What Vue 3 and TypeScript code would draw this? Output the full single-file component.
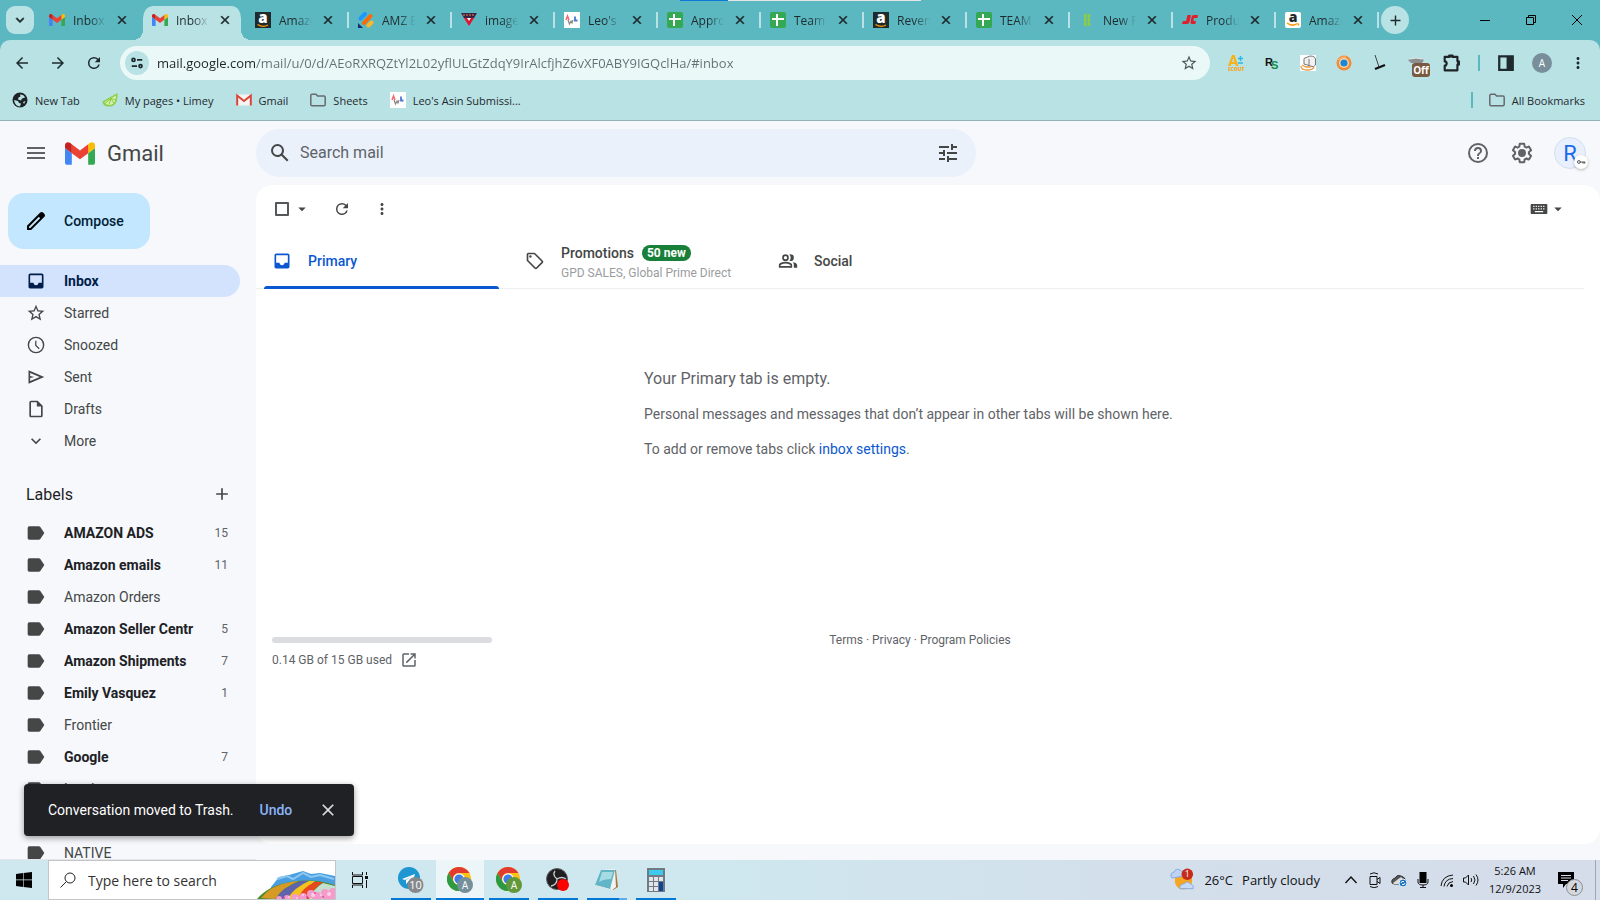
<script setup lang="ts">
import { ref } from 'vue'

interface BrowserTab { title: string; icon: string; active?: boolean; divider?: boolean }
interface NavItem { name: string; icon: string; active?: boolean }
interface MailLabel { name: string; count?: number }

const tabs: BrowserTab[] = [
  { title: 'Inbox (', icon: 'gmail' },
  { title: 'Inbox (', icon: 'gmail', active: true },
  { title: 'Amazo', icon: 'amazon-dark' },
  { title: 'AMZ B', icon: 'stripes', divider: true },
  { title: 'image', icon: 'tri', divider: true },
  { title: "Leo's A", icon: 'leo', divider: true },
  { title: 'Appro', icon: 'sheets', divider: true },
  { title: 'Team L', icon: 'sheets', divider: true },
  { title: 'Reven', icon: 'amazon-dark', divider: true },
  { title: 'TEAM', icon: 'sheets', divider: true },
  { title: 'New P', icon: 'wheat', divider: true },
  { title: 'Produ', icon: 'jc', divider: true },
  { title: 'Amazo', icon: 'amazon-light', divider: true },
]

const bookmarks = [
  { name: 'New Tab', icon: 'globe' },
  { name: 'My pages • Limey', icon: 'lime' },
  { name: 'Gmail', icon: 'gmail-old' },
  { name: 'Sheets', icon: 'folder' },
  { name: "Leo's Asin Submissi...", icon: 'leo' },
]

const extensions = ['scout', 'rs', 'toaster', 'orb', 'axe', 'off', 'puzzle']

const p = {
  close: 'M19 6.41 17.59 5 12 10.59 6.41 5 5 6.41 10.59 12 5 17.59 6.41 19 12 13.41 17.59 19 19 17.59 13.41 12z',
  down: 'M7.41 8.59 12 13.17l4.59-4.58L18 10l-6 6-6-6z',
  plus: 'M19 13h-6v6h-2v-6H5v-2h6V5h2v6h6z',
  back: 'M20 11H7.83l5.59-5.59L12 4l-8 8 8 8 1.41-1.41L7.83 13H20z',
  forward: 'm12 4-1.41 1.41L16.17 11H4v2h12.17l-5.58 5.59L12 20l8-8z',
  reload: 'M17.65 6.35A7.96 7.96 0 0 0 12 4a8 8 0 1 0 7.73 10h-2.08A6 6 0 1 1 12 6c1.66 0 3.14.69 4.22 1.78L13 11h7V4z',
  star: 'M22 9.24l-7.19-.62L12 2 9.19 8.63 2 9.24l5.46 4.73L5.82 21 12 17.27 18.18 21l-1.63-7.03zM12 15.4l-3.76 2.27 1-4.28-3.32-2.88 4.38-.38L12 6.1l1.71 4.04 4.38.38-3.32 2.88 1 4.28z',
  dots: 'M12 8c1.1 0 2-.9 2-2s-.9-2-2-2-2 .9-2 2 .9 2 2 2m0 2c-1.100 0-2 .9-2 2s.9 2 2 2 2-.9 2-2-.9-2-2-2m0 6c-1.100 0-2 .9-2 2s.9 2 2 2 2-.9 2-2-.9-2-2-2',
  menu: 'M3 18h18v-2H3zm0-5h18v-2H3zm0-7v2h18V6z',
  search: 'M20.49 19l-5.73-5.73C15.530 12.200 16 10.910 16 9.500A6.500 6.500 0 1 0 9.500 16c1.410 0 2.700-.470 3.770-1.240L19 20.490zM5 9.500a4.500 4.500 0 1 1 9 0 4.500 4.500 0 0 1-9 0',
  tune: 'M3 17v2h6v-2zM3 5v2h10V5zm10 16v-2h8v-2h-8v-2h-2v6zM7 9v2H3v2h4v2h2V9zm14 4v-2H11v2zm-6-4h2V7h4V5h-4V3h-2z',
  help: 'M11 18h2v-2h-2zm1-16a10 10 0 1 0 0 20 10 10 0 0 0 0-20m0 18a8 8 0 1 1 0-16 8 8 0 0 1 0 16m0-14a4 4 0 0 0-4 4h2c0-1.100.9-2 2-2s2 .9 2 2c0 2-3 1.750-3 5h2c0-2.250 3-2.500 3-5a4 4 0 0 0-4-4',
  gear: 'M13.850 22.250h-3.700c-.740 0-1.360-.540-1.450-1.270l-.270-1.890c-.270-.140-.530-.290-.790-.460l-1.800.720c-.7.260-1.470-.030-1.810-.650L2.200 15.530c-.35-.660-.2-1.440.36-1.880l1.530-1.190c-.010-.150-.020-.3-.020-.460 0-.150.010-.310.020-.460l-1.520-1.190c-.590-.45-.740-1.260-.370-1.880l1.850-3.190c.340-.620 1.110-.9 1.790-.630l1.810.730c.26-.17.52-.32.78-.46l.27-1.910c.09-.7.710-1.250 1.440-1.250h3.700c.74 0 1.360.54 1.450 1.270l.27 1.890c.27.14.53.29.79.46l1.800-.72c.71-.26 1.480.03 1.820.65l1.840 3.180c.36.660.2 1.440-.36 1.880l-1.520 1.190c.01.15.02.3.02.46s-.01.31-.02.46l1.520 1.190c.56.45.72 1.230.37 1.860l-1.860 3.220c-.34.62-1.110.9-1.800.63l-1.800-.72c-.26.17-.52.32-.78.46l-.27 1.910c-.1.680-.72 1.220-1.460 1.220m-3.230-2h2.760l.37-2.550.53-.22c.44-.18.88-.44 1.340-.78l.45-.34 2.380.96 1.380-2.400-2.030-1.580.07-.56c.03-.26.06-.51.06-.78s-.03-.53-.06-.78l-.07-.56 2.030-1.580-1.390-2.400-2.390.96-.45-.35c-.42-.32-.87-.58-1.330-.77l-.52-.22-.37-2.550h-2.760l-.37 2.550-.53.21c-.44.19-.88.44-1.340.79l-.45.33-2.380-.95-1.390 2.390 2.030 1.580-.07.56a7 7 0 0 0 0 1.570l.07.56-2.030 1.580 1.380 2.400 2.390-.96.45.35c.43.33.86.58 1.330.77l.53.22zM12 8a4 4 0 1 1 0 8 4 4 0 0 1 0-8',
  pencil: 'M20.410 4.940l-1.350-1.350c-.780-.780-2.050-.780-2.830 0L3 16.820V21h4.180L20.410 7.770c.79-.78.79-2.050 0-2.830M6.350 19H5v-1.350l9.820-9.820 1.350 1.350z',
  inbox: 'M19 3H5a2 2 0 0 0-2 2v14c0 1.100.9 2 2 2h14a2 2 0 0 0 2-2V5a2 2 0 0 0-2-2m0 11h-4c0 1.660-1.350 3-3 3s-3-1.340-3-3H5V5h14z',
  clock: 'M12 2a10 10 0 1 0 0 20 10 10 0 0 0 0-20m0 18.300a8.300 8.300 0 1 1 0-16.600 8.300 8.300 0 0 1 0 16.600M12.500 7H11v6l4.400 4 1-1.200-3.900-3.500z',
  send: 'M3 4v16l19-8zm2 3.200L16.400 12 5 16.800v-3.600l5-1.200-5-1.200z',
  file: 'M14 2H6a2 2 0 0 0-2 2v16c0 1.100.9 2 2 2h12a2 2 0 0 0 2-2V8zM6 20V4h7v5h5v11z',
  label: 'M15.500 4H4a2 2 0 0 0-2 2v12c0 1.100.9 2 2 2h11.500c.7 0 1.300-.3 1.700-.9L22 12l-4.800-7.100c-.4-.6-1-.9-1.700-.9',
  caret: 'm7 10 5 5 5-5z',
  tag: 'M21.400 11.600l-9-9C12 2.200 11.500 2 11 2H4a2 2 0 0 0-2 2v7c0 .5.200 1 .6 1.400l9 9c.8.8 2 .8 2.800 0l7-7c.8-.8.8-2 0-2.800M13 20l-9-9V4h7l9 9zM6.500 5a1.500 1.500 0 1 0 0 3 1.500 1.500 0 0 0 0-3',
  people: 'M9 12a4 4 0 1 0 0-8 4 4 0 0 0 0 8m0-6a2 2 0 1 1 0 4 2 2 0 0 1 0-4m0 7c-2.700 0-8 1.300-8 4v3h16v-3c0-2.700-5.300-4-8-4m6 5H3v-1c0-.6 3-2 6-2s6 1.400 6 2zM15 12a4 4 0 0 0 0-8c-.5 0-.9.1-1.300.200a6 6 0 0 1 0 7.600c.4.1.8.2 1.300.2m2.500 1.300c1 .8 1.500 1.900 1.500 3.700v3h4v-3c0-2-2.900-3.300-5.500-3.700',
  open: 'M19 19H5V5h7V3H5a2 2 0 0 0-2 2v14c0 1.100.9 2 2 2h14a2 2 0 0 0 2-2v-7h-2zM14 3v2h3.590l-9.830 9.830 1.410 1.410L19 6.410V10h2V3z',
  keyboard: 'M21 6H3a1 1 0 0 0-1 1v10c0 .6.400 1 1 1h18c.6 0 1-.4 1-1V7c0-.6-.4-1-1-1M11 8h1.500v1.500H11zm0 3h1.500v1.500H11zM8 8h1.500v1.500H8zm0 3h1.500v1.500H8zm-3-3h1.500v1.500H5zm0 3h1.500v1.500H5zm12 5H7v-1.500h10zm-1.500-3.500H14V11h1.500zm0-3H14V8h1.500zm3 3H17V11h1.500zm0-3H17V8h1.500z',
}

const nav: NavItem[] = [
  { name: 'Inbox', icon: p.inbox, active: true },
  { name: 'Starred', icon: p.star },
  { name: 'Snoozed', icon: p.clock },
  { name: 'Sent', icon: p.send },
  { name: 'Drafts', icon: p.file },
  { name: 'More', icon: p.down },
]

const labels: MailLabel[] = [
  { name: 'AMAZON ADS', count: 15 },
  { name: 'Amazon emails', count: 11 },
  { name: 'Amazon Orders' },
  { name: 'Amazon Seller Centr', count: 5 },
  { name: 'Amazon Shipments', count: 7 },
  { name: 'Emily Vasquez', count: 1 },
  { name: 'Frontier' },
  { name: 'Google', count: 7 },
  { name: 'Leads' },
  { name: 'Listings' },
  { name: 'NATIVE' },
]

const apps = [
  { name: 'Telegram', icon: 'telegram' },
  { name: 'Chrome', icon: 'chrome-a', active: true },
  { name: 'Chrome, second profile', icon: 'chrome-b' },
  { name: 'OBS', icon: 'obs' },
  { name: 'Notepad', icon: 'notepad', stacked: true },
  { name: 'Calculator', icon: 'calc' },
]

const url = ref('mail.google.com/mail/u/0/d/AEoRXRQZtYl2L02yflULGtZdqY9IrAlcfjhZ6vXF0ABY9IGQclHa/#inbox')
const mailQuery = ref('')
const winQuery = ref('')
const allSelected = ref(false)
</script>

<template>
  <div class="desktop">
    <svg class="sprite" aria-hidden="true">
      <symbol id="gmail" viewBox="52 42 88 66">
        <path fill="#4285f4" d="M58 108h14V74L52 59v43c0 3.320 2.690 6 6 6" />
        <path fill="#34a853" d="M120 108h14c3.320 0 6-2.690 6-6V59l-20 15" />
        <path fill="#fbbc04" d="M120 48v26l20-15v-8c0-7.420-8.470-11.650-14.400-7.200" />
        <path fill="#ea4335" d="M72 74V48l24 18 24-18v26L96 92" />
        <path fill="#c5221f" d="M52 51v8l20 15V48l-5.600-4.200c-5.940-4.450-14.400-.220-14.400 7.200" />
      </symbol>
      <symbol id="amazon-dark" viewBox="0 0 16 16">
        <path d="M0 0h16v16H0z" />
        <text x="8" y="11" text-anchor="middle" font-family="Open Sans, sans-serif" font-size="15" font-weight="800" fill="#fff">a</text>
        <path d="M2.500 12.500q5.500 3.500 10.500.5" fill="none" stroke="#f90" stroke-width="1.300" />
      </symbol>
      <symbol id="amazon-light" viewBox="0 0 16 16">
        <rect width="16" height="16" rx="2" fill="#fff" />
        <text x="8" y="10" text-anchor="middle" font-family="Open Sans, sans-serif" font-size="14" font-weight="800">a</text>
        <path d="M2 11q5.500 4 10.500.5M13.500 11.500v2" fill="none" stroke="#f90" stroke-width="1.500" />
      </symbol>
      <symbol id="stripes" viewBox="0 0 16 16">
        <g fill="none" stroke-width="4" stroke-linecap="round">
          <path d="M2.500 6.500 7 2" stroke="#1e98ff" />
          <path d="m6 11 6.500-7" stroke="#ff6a00" />
          <path d="m10.500 13.500 3-3" stroke="#fbb829" />
        </g>
        <path d="m0 11 5 5H0z" fill="#12306b" />
      </symbol>
      <symbol id="tri" viewBox="0 0 16 16">
        <path d="M0 1h16l-3 5H3z" fill="#3b2146" />
        <path d="M3 6h10l-5 8z" fill="#e3122d" />
        <path d="M6 6h4L8 9z" fill="#fff" />
        <path d="M2 3h12" stroke="#e58a3a" stroke-dasharray="2 1" />
      </symbol>
      <symbol id="leo" viewBox="0 0 16 16">
        <path d="M0 0h16v16H0z" fill="#fff" />
        <path d="m2 8 1.500-4L5 8" fill="none" stroke="#ee6d72" stroke-width="1.600" />
        <path d="m4 8 1.500 4L7 9l1 2 1-3" fill="none" stroke="#8b8585" stroke-width="1.200" />
        <path d="M11 4.500v4h2.500" fill="none" stroke="#4a78d0" stroke-width="1.800" />
      </symbol>
      <symbol id="sheets" viewBox="0 0 16 16">
        <rect width="16" height="16" rx="2" fill="#34a853" />
        <path d="M2 7h12M7 2v12" stroke="#fff" stroke-width="2" />
      </symbol>
      <symbol id="wheat" viewBox="0 0 16 16">
        <path d="M8 15V1" stroke="#8bc34a" />
        <g fill="#8fcf3c">
          <ellipse cx="6" cy="4" rx="1.200" ry="2" /><ellipse cx="10" cy="4" rx="1.200" ry="2" />
          <ellipse cx="6" cy="8" rx="1.200" ry="2" /><ellipse cx="10" cy="8" rx="1.200" ry="2" />
          <ellipse cx="6" cy="12" rx="1.200" ry="2" /><ellipse cx="10" cy="12" rx="1.200" ry="2" />
        </g>
      </symbol>
      <symbol id="jc" viewBox="0 0 16 16">
        <path d="M5.500 3H9l-1.500 7q-.5 2-2.500 2H0l1-3h3zM16 3l-.5 3H12l-.7 3H14l-.7 3H10q-2 0-1.500-2l1-5q.5-2 2.500-2z" fill="#e01f2d" />
      </symbol>
      <symbol id="globe" viewBox="0 0 16 16">
        <circle cx="8" cy="8" r="7.500" fill="#1f2224" />
        <path d="M8 2.500q4 0 5 3l-3 1-1 2-3-1 .5-2 2-1zM2 8l4 1 1 2 2 .5-1 3q-5-.5-6-6.500M11 10l2.500-1-1.500 3z" fill="#b9e2e5" />
      </symbol>
      <symbol id="lime" viewBox="0 0 16 16">
        <path d="M15.500 1Q16 14 8 14.500 1 15 .5 9.500z" fill="#8bcf45" />
        <path d="M14 3.500Q14 12.500 8 13 3 13 2.500 10z" fill="#d7efb0" />
        <path d="m9 6.500-2 6m2-6 3 5m-3-5 5 1.500M9 6.500l-6 5" stroke="#8bcf45" />
      </symbol>
      <symbol id="gmail-old" viewBox="0 0 16 16">
        <path d="M1 2.500h14v11H1z" fill="#f4f4f4" />
        <path d="M1.200 13.500v-10L8 9l6.800-5.500v10" fill="none" stroke="#db4437" stroke-width="2" />
      </symbol>
      <symbol id="folder" viewBox="0 0 16 16">
        <path d="M.8 3.500q0-1.200 1.200-1.200h4l1.600 1.800H14q1.200 0 1.200 1.200v7.200q0 1.200-1.200 1.200H2q-1.200 0-1.200-1.200z" fill="none" stroke="#666a6d" stroke-width="1.500" />
      </symbol>
      <symbol id="scout" viewBox="0 0 16 16">
        <path d="M0 11 4 0h2.500l4 11H7.800l-.5-2H3.200l-.5 2zM4 7h2.500L5.200 3z" fill="#f7b21b" />
        <path d="M10 3.500h5M12.500 1v5M10 8h5" stroke="#27b9e8" stroke-width="1.400" />
        <text x="8" y="16" text-anchor="middle" font-family="Open Sans, sans-serif" font-size="5" font-weight="800" fill="#f2a71b">SCOUT</text>
      </symbol>
      <symbol id="rs" viewBox="0 0 16 16">
        <text x="1" y="11" font-family="Liberation Sans, sans-serif" font-size="11" font-weight="700" fill="#111">R</text>
        <text x="7" y="14" font-family="Liberation Sans, sans-serif" font-size="11" font-weight="700" fill="#148a45">S</text>
      </symbol>
      <symbol id="toaster" viewBox="0 0 16 16">
        <path d="M0 0h16v16H0z" fill="#fff" />
        <path d="M4 3.500 10 1q5 0 5.500 3v6q-2 3-5 1L4 9zM9 4v7" fill="#f1f1f1" stroke="#777" />
        <path d="M1 11q0 4 6 4t7-3M2 10l4 2h5" fill="none" stroke="#e99a45" stroke-width="1.300" />
      </symbol>
      <symbol id="orb" viewBox="0 0 16 16">
        <circle cx="8" cy="8" r="7.500" fill="#f28b36" />
        <circle cx="8" cy="8" r="5" fill="#fbd9a8" />
        <circle cx="8" cy="8" r="3.600" fill="#1c87d8" />
        <path d="M2 5q3-4 8-3" fill="none" stroke="#ffc58a" />
      </symbol>
      <symbol id="axe" viewBox="0 0 16 16">
        <path d="m3 0 4 12" stroke="#444" />
        <path d="m3 14 10-4" stroke="#111" stroke-width="2.200" />
      </symbol>
      <symbol id="off" viewBox="0 0 24 24">
        <path d="M2 7q8-4 16 0l-2 3H5z" fill="#8b8f90" />
        <path d="M4 6q6-2 12 0" stroke="#e8e8e8" fill="none" />
        <rect x="6" y="10" width="18" height="14" rx="3" fill="#795a40" />
        <text x="15" y="21" text-anchor="middle" font-family="Open Sans, sans-serif" font-size="10" font-weight="700" fill="#fff">Off</text>
      </symbol>
      <symbol id="puzzle" viewBox="0 0 16 16">
        <path d="M1.500 2.500h4v-1h3v1h4.300v4h1v3h-1v5H1.500v-4.200h1q1.500-1.800 0-3.600h-1z" fill="none" stroke="#1f2326" stroke-width="1.900" stroke-linejoin="round" />
        <path d="M5 1h4v2H5zM12.500 6H15v4h-2.500z" fill="#1f2326" />
      </symbol>
      <symbol id="telegram" viewBox="0 0 26 26">
        <circle cx="11" cy="11" r="11" fill="#1e96d1" />
        <path d="m4 12 13-5-2 6-4 1-3 3v-4l6-4-7 4z" fill="#fff" />
        <circle cx="17.500" cy="18" r="8" fill="#85898b" />
        <text x="17.500" y="22" text-anchor="middle" font-family="Open Sans, sans-serif" font-size="11" fill="#fff">10</text>
      </symbol>
      <symbol id="chrome-a" viewBox="0 0 26 26">
        <circle cx="12" cy="12" r="12" fill="#fbc116" />
        <path d="M1.600 6A12 12 0 0 1 22.400 6H12a6 6 0 0 0-5.200 9z" fill="#e33b2e" />
        <path d="M1.600 6A12 12 0 0 0 12 24l5.200-9a6 6 0 0 1-10.400 0z" fill="#2a9a45" />
        <circle cx="12" cy="12" r="5.800" fill="#fff" />
        <circle cx="12" cy="12" r="4.600" fill="#3f7de8" />
        <circle cx="18" cy="18" r="8" fill="#758f9b" />
        <text x="18" y="22" text-anchor="middle" font-family="Roboto, sans-serif" font-size="10" fill="#fff">A</text>
      </symbol>
      <symbol id="chrome-b" viewBox="0 0 26 26">
        <circle cx="12" cy="12" r="12" fill="#fbc116" />
        <path d="M1.600 6A12 12 0 0 1 22.400 6H12a6 6 0 0 0-5.200 9z" fill="#e33b2e" />
        <path d="M1.600 6A12 12 0 0 0 12 24l5.200-9a6 6 0 0 1-10.400 0z" fill="#2a9a45" />
        <circle cx="12" cy="12" r="5.800" fill="#fff" />
        <circle cx="12" cy="12" r="4.600" fill="#3f7de8" />
        <circle cx="18" cy="18" r="8" fill="#62983a" />
        <text x="18" y="22" text-anchor="middle" font-family="Roboto, sans-serif" font-size="10" fill="#fff">A</text>
      </symbol>
      <symbol id="obs" viewBox="0 0 26 26">
        <circle cx="12" cy="12" r="10.500" fill="#1f1f22" stroke="#606265" />
        <path d="M10 4q-3 4 2 8 5-3 9 0M12 12q0 6-6 7" fill="none" stroke="#c9cacc" stroke-width="1.300" />
        <circle cx="18" cy="18" r="6" fill="#f00" />
      </symbol>
      <symbol id="notepad" viewBox="0 0 26 26">
        <path d="m22 3 2 17-5 3-2-20z" fill="#a47a3c" />
        <path d="m8 3 13-1 1 18-4 3z" fill="#f2f4f4" />
        <path d="M7 3h14l-5 19-15-4z" fill="#62b5c6" />
        <path d="M8 5h11l-2 7Q10 12 5 15z" fill="#a5dbe3" />
        <path d="m1 18 15 4 2 1-16-3z" fill="#dfe6e8" />
      </symbol>
      <symbol id="calc" viewBox="0 0 26 26">
        <path d="M4 1h18v24H4z" fill="#6f7a84" />
        <path d="M6 3h14v5H6z" fill="#3ec9ee" />
        <path d="M6 10h4v4H6zm5 0h4v4h-4zm5 0h4v4h-4zM6 15h4v4H6zm5 0h4v4h-4zM6 20h4v4H6zm5 0h4v4h-4z" fill="#e3e6e8" />
        <path d="M16 15h4v9h-4z" fill="#12448f" />
      </symbol>
    </svg>

    <header class="browser">
      <div class="strip">
        <div class="loading" aria-hidden="true"></div>
        <button class="tab-search" aria-label="Search tabs"><svg viewBox="0 0 24 24"><path :d="p.down" /></svg></button>
        <div v-for="(tab, i) in tabs" :key="i" class="tab" :class="{ active: tab.active, divider: tab.divider }">
          <svg class="fav"><use :href="'#' + tab.icon" /></svg>
          <span class="tab-title">{{ tab.title }}</span>
          <button class="tab-close" aria-label="Close tab"><svg viewBox="0 0 24 24"><path :d="p.close" /></svg></button>
        </div>
        <div class="strip-end"></div>
        <button class="new-tab" aria-label="New tab"><svg viewBox="0 0 24 24"><path :d="p.plus" /></svg></button>
        <div class="win-controls">
          <button aria-label="Minimize"><svg viewBox="0 0 12 12"><path d="M1 6.500h10" /></svg></button>
          <button aria-label="Restore"><svg viewBox="0 0 12 12"><path d="M1.500 3.500h7v7h-7zM3.500 3.500v-2h7v7h-2" /></svg></button>
          <button aria-label="Close"><svg viewBox="0 0 12 12"><path d="m1 1 10 10M11 1 1 11" /></svg></button>
        </div>
      </div>

      <div class="toolbar">
        <button class="tool" aria-label="Back"><svg viewBox="0 0 24 24"><path :d="p.back" /></svg></button>
        <button class="tool" aria-label="Forward"><svg viewBox="0 0 24 24"><path :d="p.forward" /></svg></button>
        <button class="tool" aria-label="Reload"><svg viewBox="0 0 24 24"><path :d="p.reload" /></svg></button>
        <div class="address">
          <button class="site" aria-label="Site information">
            <svg viewBox="0 0 16 16"><path d="M8 4.500h6M2 11.500h6" /><circle cx="4" cy="4.500" r="1.700" /><circle cx="12" cy="11.500" r="1.700" /></svg>
          </button>
          <input v-model="url" class="url" aria-label="Address" />
          <button class="bookmark" aria-label="Bookmark this page"><svg viewBox="0 0 24 24"><path :d="p.star" /></svg></button>
        </div>
        <div class="extensions">
          <button v-for="e in extensions" :key="e" class="ext" :class="e" :aria-label="e"><svg><use :href="'#' + e" /></svg></button>
        </div>
        <div class="bar"></div>
        <button class="tool" aria-label="Side panel"><svg viewBox="0 0 16 16"><path d="M1 1h14v14H1zm2 2v10h5.500V3z" fill-rule="evenodd" /></svg></button>
        <button class="profile" aria-label="Profile">A</button>
        <button class="tool" aria-label="Browser menu"><svg viewBox="0 0 24 24"><path :d="p.dots" /></svg></button>
      </div>

      <nav class="bookmarks">
        <a v-for="b in bookmarks" :key="b.name" href="#"><svg class="fav"><use :href="'#' + b.icon" /></svg>{{ b.name }}</a>
        <div class="bar push"></div>
        <a href="#"><svg class="fav"><use href="#folder" /></svg>All Bookmarks</a>
      </nav>
    </header>

    <div class="gmail">
      <aside class="side">
        <div class="brand">
          <button class="menu" aria-label="Main menu"><svg viewBox="0 0 24 24"><path :d="p.menu" /></svg></button>
          <svg class="logo"><use href="#gmail" /></svg>
          <span>Gmail</span>
        </div>
        <button class="compose"><svg viewBox="0 0 24 24"><path :d="p.pencil" /></svg>Compose</button>
        <nav class="rows">
          <a v-for="n in nav" :key="n.name" href="#" class="row" :class="{ active: n.active }">
            <svg viewBox="0 0 24 24"><path :d="n.icon" /></svg><span>{{ n.name }}</span>
          </a>
        </nav>
        <div class="labels-head">
          <h2>Labels</h2>
          <button aria-label="Create new label"><svg viewBox="0 0 24 24"><path :d="p.plus" /></svg></button>
        </div>
        <nav class="rows">
          <a v-for="l in labels" :key="l.name" href="#" class="row" :class="{ unread: l.count }">
            <svg viewBox="0 0 24 24"><path :d="p.label" /></svg><span>{{ l.name }}</span><em v-if="l.count">{{ l.count }}</em>
          </a>
        </nav>
      </aside>

      <div class="content">
        <div class="top">
          <form class="search" @submit.prevent>
            <button aria-label="Search"><svg viewBox="0 0 24 24"><path :d="p.search" /></svg></button>
            <input v-model="mailQuery" placeholder="Search mail" aria-label="Search mail" />
            <button aria-label="Search options"><svg viewBox="0 0 24 24"><path :d="p.tune" /></svg></button>
          </form>
          <div class="account">
            <button aria-label="Support"><svg viewBox="0 0 24 24"><path :d="p.help" /></svg></button>
            <button aria-label="Settings"><svg viewBox="0 0 24 24"><path :d="p.gear" /></svg></button>
            <button class="avatar" aria-label="Account">R
              <span class="key"><svg viewBox="0 0 12 12"><circle cx="3.500" cy="6" r="1.700" /><path d="M5 6h6M8.500 6v2M10.500 6v2" /></svg></span>
            </button>
          </div>
        </div>

        <main class="panel">
          <div class="actions">
            <input v-model="allSelected" type="checkbox" aria-label="Select all" />
            <button class="caret" aria-label="Select options"><svg viewBox="0 0 24 24"><path :d="p.caret" /></svg></button>
            <button class="refresh" aria-label="Refresh"><svg viewBox="0 0 24 24"><path :d="p.reload" /></svg></button>
            <button class="more" aria-label="More options"><svg viewBox="0 0 24 24"><path :d="p.dots" /></svg></button>
            <button class="keys" aria-label="Input tools"><svg viewBox="0 0 24 24"><path :d="p.keyboard" /></svg></button>
            <button class="caret" aria-label="Choose input tool"><svg viewBox="0 0 24 24"><path :d="p.caret" /></svg></button>
          </div>
          <div class="categories" role="tablist">
            <button role="tab" aria-selected="true" class="category active"><svg viewBox="0 0 24 24"><path :d="p.inbox" /></svg>Primary</button>
            <button role="tab" aria-selected="false" class="category">
              <svg viewBox="0 0 24 24"><path :d="p.tag" /></svg>
              <span class="promo">
                <span class="promo-title">Promotions<b>50 new</b></span>
                <small>GPD SALES, Global Prime Direct</small>
              </span>
            </button>
            <button role="tab" aria-selected="false" class="category"><svg viewBox="0 0 24 24"><path :d="p.people" /></svg>Social</button>
          </div>
          <section class="empty">
            <div class="message">
              <h1>Your Primary tab is empty.</h1>
              <p>Personal messages and messages that don’t appear in other tabs will be shown here.</p>
              <p>To add or remove tabs click <a href="#">inbox settings</a>.</p>
            </div>
          </section>
          <footer class="foot">
            <div class="storage">
              <div class="meter"></div>
              <a href="#">0.14 GB of 15 GB used<svg viewBox="0 0 24 24"><path :d="p.open" /></svg></a>
            </div>
            <div class="legal"><a href="#">Terms</a> · <a href="#">Privacy</a> · <a href="#">Program Policies</a></div>
            <div></div>
          </footer>
        </main>
      </div>

      <div class="toast" role="status">
        <span>Conversation moved to Trash.</span>
        <button class="undo">Undo</button>
        <button class="dismiss" aria-label="Dismiss"><svg viewBox="0 0 24 24"><path :d="p.close" /></svg></button>
      </div>
    </div>

    <footer class="taskbar">
      <button class="start" aria-label="Start"><svg viewBox="0 0 16 16"><path d="m0 2 7-1v6.600H0zM7.600.900 16 0v7.600H7.600zM0 8.300h7V15l-7-1zM7.600 8.300H16V16l-8.400-1z" /></svg></button>
      <label class="win-search">
        <svg class="lens" viewBox="0 0 16 16"><circle cx="10" cy="6" r="5" /><path d="M6.500 9.500.5 15.500" /></svg>
        <input v-model="winQuery" placeholder="Type here to search" aria-label="Type here to search" />
        <svg class="scene" viewBox="0 0 78 28" aria-hidden="true">
          <path d="M14 16 22 6l10-2 14-4 8 3 9-1 15 3v23H10z" fill="#4b9fe0" />
          <path d="m20 8 10-3 6 3 10-6 8 4 9-2 14 4" fill="none" stroke="#8cc9f2" stroke-width="2" />
          <path d="M0 28q12-14 34-17 22-4 44 3v14z" fill="#4f8b2c" />
          <path d="M4 27q10-13 30-16l8-1Q26 16 18 28z" fill="#d79a24" />
          <path d="M18 28q8-12 26-18h8Q40 16 30 28z" fill="#5f62ad" />
          <path d="M30 28q8-12 22-18h6Q48 18 40 28z" fill="#f3c31d" />
          <path d="M40 28q6-12 18-17h8Q56 18 52 28z" fill="#e8481e" />
          <path d="M52 28q4-10 14-16l12 3v13z" fill="#c3e0cf" />
          <g fill="#f59acb"><circle cx="22" cy="28" r="3" /><circle cx="30" cy="27" r="3" /><circle cx="38" cy="27" r="4" /><circle cx="46" cy="26" r="4" /><circle cx="54" cy="23" r="4" /><circle cx="60" cy="26" r="5" /><circle cx="68" cy="22" r="4" /><circle cx="72" cy="26" r="6" /><circle cx="76" cy="21" r="4" /></g>
          <g fill="#fbd0e6"><circle cx="32" cy="26" r="1" /><circle cx="46" cy="24" r="1" /><circle cx="56" cy="24" r="2" /><circle cx="64" cy="24" r="1" /><circle cx="72" cy="23" r="2" /><circle cx="40" cy="27" r="1" /></g>
          <g fill="#d84c9c"><circle cx="27" cy="27" r="1" /><circle cx="50" cy="26" r="1" /><circle cx="66" cy="26" r="1" /><circle cx="58" cy="22" r="1" /></g>
        </svg>
      </label>
      <button class="task-view" aria-label="Task view"><svg viewBox="0 0 16 16"><path d="M.5 0v3h10V0M.5 16v-3h10v3M.500 4.500h10v7H.500zM14.500 0v3M14.500 8v8" /><path d="M13 4h3v3h-3z" class="solid" /></svg></button>
      <button v-for="a in apps" :key="a.name" class="app" :class="{ active: a.active, stacked: a.stacked }" :aria-label="a.name"><svg><use :href="'#' + a.icon" /></svg></button>
      <button class="weather">
        <svg viewBox="0 0 26 24" aria-hidden="true">
          <circle cx="14" cy="13" r="9" fill="#f5a623" />
          <path d="M2 10q-3-5 2-6 2-5 7-2 4 2 3 6z" fill="#bcd3f5" stroke="#87a8dc" />
          <path d="M10 21q0-5 5-5 3-4 6 0 4 1 3 5z" fill="#c6dafa" stroke="#87a8dc" />
          <circle cx="18" cy="6" r="6" fill="#c42b1c" />
          <text x="18" y="9" text-anchor="middle" font-family="Open Sans, sans-serif" font-size="9" fill="#fff">1</text>
        </svg>
        <span>26°C</span><span>Partly cloudy</span>
      </button>
      <div class="tray">
        <button aria-label="Show hidden icons"><svg viewBox="0 0 16 16"><path d="m2.500 11 5.500-6 5.500 6" stroke-width="1.400" /></svg></button>
        <button aria-label="Meet now"><svg viewBox="0 0 16 16"><path d="M3 4.500h7v8H3zM10 7.500l3-2v6l-3-2M3 2q4-2.500 8 0M3 14.500q4 2.500 8 0" /></svg></button>
        <button aria-label="OneDrive"><svg viewBox="0 0 16 16"><path d="M1 11q-1-4 3-5 2-4 6-2 4 1 5 5l-2 3H3z" fill="#555" stroke="#333" /><path d="m2 11 8-6 4 4v3H3z" fill="#ddd" stroke="none" /><circle cx="12" cy="11" r="4" fill="#1976c5" stroke="#e8eef5" /><path d="M10 11q0-2 3-1.500M14 11q0 2-3 1.500" stroke="#fff" /></svg></button>
        <button aria-label="Microphone"><svg viewBox="0 0 16 16"><rect x="4.500" y="0" width="7" height="11" fill="#000" stroke="none" /><path d="M3 7v3q0 3 5 3t5-3V7M8 13v3M5 15.500h6" /></svg></button>
        <button aria-label="Network"><svg viewBox="0 0 16 16"><path d="M2 14Q3 4 14 3M5 14.500Q6 7 14 6.500M8 14.500q1-4.500 6-5" /><circle cx="12.500" cy="13.500" r="1.500" fill="#000" stroke="none" /></svg></button>
        <button aria-label="Volume"><svg viewBox="0 0 16 16"><path d="M.5 6v4h2l3 3V3l-3 3zM8 6q1.500 2 0 4M10.500 4q3 4 0 8M13 2.500q4 5.500 0 11" /></svg></button>
      </div>
      <div class="clock"><span>5:26 AM</span><span>12/9/2023</span></div>
      <button class="notes" aria-label="Notifications">
        <svg viewBox="0 0 16 16"><path d="M0 0h16v12H8l-3 4v-4H0z" /><path d="M3 3.500h10M3 6h10M3 8.500h7" stroke="#d5deea" /></svg>
        <span>4</span>
      </button>
    </footer>
  </div>
</template>

<style>
body { margin: 0; overflow: hidden; }
</style>

<style scoped>
.desktop { height: 100vh; display: flex; flex-direction: column; overflow: hidden; font-family: Roboto, "Liberation Sans", sans-serif; }
.desktop * { box-sizing: border-box; }
.sprite { display: none; }
button { border: 0; padding: 0; background: none; color: inherit; font: inherit; display: flex; align-items: center; justify-content: center; flex: none; }
input { border: 0; padding: 0; margin: 0; background: none; outline: 0; font: inherit; min-width: 0; }
a { color: inherit; text-decoration: none; }
svg { flex: none; fill: currentColor; }

.browser { font-family: "Open Sans", "Noto Sans", sans-serif; font-size: 11px; color: #1f2a2d; background: linear-gradient(#5bb8c1 52px, #b9e2e5 52px); border-bottom: 1px solid #91b3b8; height: 121px; flex: none; }
.strip { position: relative; display: flex; align-items: center; height: 40px; padding-left: 6px; }
.loading { position: absolute; top: 0; left: 680px; width: 241px; height: 1px; background: linear-gradient(90deg, #0b78d8 48px, #e2e4e5 48px); }
.tab-search { width: 28px; height: 28px; margin-right: 4px; border-radius: 9px; background: #b9e2e5; }
.tab-search svg { width: 16px; height: 16px; stroke: currentColor; }
.tab { position: relative; flex: 0 1 103px; height: 34px; align-self: flex-end; display: flex; align-items: center; padding: 0 11px 6px; }
.tab.divider::before, .strip-end { content: ""; width: 2px; height: 16px; background: #b9e2e5; margin: 0 9px 0 -11px; }
.strip-end { margin: 0 2px 0 0; }
.tab.active { background: #b9e2e5; background-clip: padding-box; border: solid transparent; border-width: 0 3px 0 2px; padding: 0 8px 6px 9px; border-radius: 12px 12px 0 0; }
.tab.active::before, .tab.active::after { content: ""; position: absolute; bottom: 0; width: 10px; height: 10px; }
.tab.active::before { left: -10px; background: radial-gradient(circle at 0 0, transparent 10px, #b9e2e5 10px); }
.tab.active::after { right: -10px; background: radial-gradient(circle at 100% 0, transparent 10px, #b9e2e5 10px); }
.fav { width: 16px; height: 16px; margin-right: 8px; }
.tab-title { flex: 0 0 34px; font-size: 12px; overflow: hidden; white-space: nowrap; mask-image: linear-gradient(90deg, #000 50%, transparent 98%); }
.tab-close { width: 16px; height: 16px; margin-left: 7px; }
.tab-close svg { width: 14px; height: 14px; stroke: currentColor; }
.new-tab { width: 28px; height: 28px; border-radius: 50%; background: #b9e2e5; }
.new-tab svg { width: 17px; height: 17px; }
.win-controls { display: flex; margin-left: auto; color: #000; }
.win-controls button { width: 46px; height: 40px; }
.win-controls svg { width: 12px; height: 12px; fill: none; stroke: currentColor; }

.toolbar { display: flex; align-items: center; height: 46px; padding: 0 4px; background: #b9e2e5; border-radius: 10px 10px 0 0; }
.tool { width: 36px; height: 28px; }
.tool svg { width: 18px; height: 18px; }
.address { flex: 1; height: 34px; margin: 0 8px; padding: 0 12px 0 5px; display: flex; align-items: center; border-radius: 17px; background: #ebf8f8; }
.site { width: 24px; height: 24px; border-radius: 50%; background: #b9e2e5; }
.site svg { width: 14px; height: 14px; fill: none; stroke: currentColor; stroke-width: 2; }
.url { flex: 1; margin-left: 8px; height: 24px; font-size: 13px; color: transparent; background: linear-gradient(90deg, #1d2426 99px, #607074 99px); background-clip: text; }
.bookmark { color: #4e585c; }
.bookmark svg { width: 18px; height: 18px; }
.extensions { display: flex; }
.ext { width: 36px; height: 28px; }
.ext svg { width: 16px; height: 16px; }
.ext.off svg { width: 24px; height: 24px; margin: 4px 0 0 4px; }
.ext.puzzle svg { width: 18px; height: 18px; }
.bar { width: 2px; height: 16px; background: #5bb8c1; margin: 0 8px; }
.profile { width: 20px; height: 20px; margin: 0 8px; border-radius: 50%; background: #788f9b; color: #fff; font-size: 10px; }

.bookmarks { display: flex; align-items: center; height: 28px; padding: 0 15px 0 12px; gap: 22px; white-space: nowrap; }
.bookmarks a { display: flex; align-items: center; }
.bookmarks .fav { margin-right: 7px; }
.bar.push { margin: 0 -6px 0 auto; }

.gmail { position: relative; flex: 1; min-height: 0; display: flex; background: #f6f8fc; color: #444746; }
.side { width: 256px; flex: none; overflow: hidden; border-bottom: 1px solid #e4e6e9; }
.brand { display: flex; align-items: center; height: 64px; padding-left: 24px; font-size: 22px; }
.menu svg { width: 24px; height: 24px; }
.menu { color: #5f6368; }
.logo { width: 30px; height: 23px; margin: 0 12px 0 17px; }
.compose { height: 56px; margin: 8px 0 16px 8px; padding: 0 26px 0 16px; border-radius: 16px; background: #c2e7ff; color: #001d35; font-size: 14px; font-weight: 500; }
.compose svg { width: 24px; height: 24px; margin-right: 16px; color: #000; }
.row { display: flex; align-items: center; height: 32px; margin-right: 16px; padding: 0 12px 0 26px; border-radius: 0 16px 16px 0; font-size: 14px; }
.row svg { width: 20px; height: 20px; margin-right: 18px; }
.row span { flex: 1; white-space: nowrap; overflow: hidden; }
.row em { font-style: normal; font-size: 12px; font-weight: 400; color: #5f6368; }
.row.active { background: #d3e3fd; color: #001d4b; font-weight: 700; }
.row.unread { font-weight: 700; color: #202124; }
.row.unread svg { color: #444746; }
.labels-head { display: flex; align-items: center; justify-content: space-between; height: 60px; padding: 14px 24px 0 26px; color: #1f1f1f; }
.labels-head h2 { margin: 0; font-size: 16px; font-weight: 400; }
.labels-head svg { width: 20px; height: 20px; color: #444746; }

.content { flex: 1; min-width: 0; display: flex; flex-direction: column; padding-bottom: 16px; }
.top { display: flex; align-items: center; justify-content: space-between; height: 64px; flex: none; }
.search { flex: 0 1 720px; height: 48px; display: flex; align-items: center; padding: 0 16px 0 12px; border-radius: 24px; background: #eaf1fb; }
.search svg { width: 24px; height: 24px; }
.search input { flex: 1; margin-left: 8px; padding-bottom: 2px; font-size: 16px; color: #444746; }
.search input::placeholder { color: #5f6368; opacity: 1; }
.account { display: flex; align-items: center; gap: 20px; padding-right: 14px; color: #5f6368; }
.account > button svg { width: 24px; height: 24px; }
.avatar { position: relative; width: 32px; height: 32px; border: 1px solid #d3def0; border-radius: 50%; background: #e8f0fe; color: #1a6be8; font-size: 22px; }
.key { position: absolute; right: -3px; bottom: -1px; width: 14px; height: 14px; border-radius: 50%; background: #fff; box-shadow: 0 1px 3px #0004; display: flex; align-items: center; justify-content: center; color: #333; }
.account .key svg { width: 10px; height: 10px; fill: none; stroke: currentColor; }

.panel { flex: 1; min-height: 0; overflow: hidden; background: #fff; border-radius: 16px; display: flex; flex-direction: column; }
.actions { display: flex; align-items: center; height: 48px; flex: none; padding: 0 33px 0 19px; }
.actions svg { width: 18px; height: 18px; }
.actions input { appearance: none; width: 14px; height: 14px; border: 2px solid #55585a; border-radius: 1px; margin-right: 4px; }
.refresh { margin-left: 22px; }
.more { margin-left: 22px; }
.actions .keys { margin-left: auto; }
.actions .keys svg { width: 20px; height: 20px; }
.categories { display: flex; height: 56px; flex: none; padding: 0 8px; margin-right: 16px; border-bottom: 1px solid #eceff1; }
.category { position: relative; width: 253px; justify-content: flex-start; padding-left: 8px; font-size: 14px; font-weight: 500; text-align: left; }
.category svg { width: 20px; height: 20px; margin-right: 16px; }
.category.active { color: #0b57d0; }
.category.active::after { content: ""; position: absolute; left: 0; right: 18px; bottom: -1px; height: 3px; background: #0b57d0; border-radius: 3px 3px 0 0; }
.promo { display: flex; flex-direction: column; gap: 3px; padding-top: 4px; }
.promo-title { display: flex; align-items: center; gap: 8px; line-height: 18px; }
.promo b { padding: 0 5px; border-radius: 8px; background: #188038; color: #fff; font-size: 12px; line-height: 16px; }
.promo small { font-size: 12px; line-height: 16px; font-weight: 400; color: #9a9da0; white-space: nowrap; }
.empty { display: flex; justify-content: center; padding: 80px 28px 0 0; color: #5f6368; }
.message { min-width: 540px; }
.empty h1 { margin: 0; font-size: 16px; line-height: 20px; font-weight: 400; }
.empty p { margin: 15px 0 0; font-size: 14px; line-height: 20px; }
.empty a { color: #0b57d0; }
.foot { display: grid; grid-template-columns: 220px 1fr 236px; margin: 173px 16px 0; font-size: 12px; line-height: 16px; color: #5f6368; }
.meter { height: 6px; margin: 5px 0 8px; border-radius: 3px; background: #dadce0; }
.storage a { display: flex; align-items: center; }
.storage svg { width: 18px; height: 18px; margin-left: 8px; }
.legal { text-align: center; }

.toast { position: absolute; left: 24px; bottom: 24px; height: 52px; display: flex; align-items: center; padding: 0 16px 0 24px; border-radius: 4px; background: #202124; color: #fff; font-size: 14px; box-shadow: 0 2px 6px #0006; }
.undo { margin: 0 26px; color: #8ab4f8; font-weight: 500; }
.dismiss { color: #dadce0; }
.dismiss svg { width: 20px; height: 20px; }

.taskbar { display: flex; align-items: stretch; height: 40px; flex: none; background: linear-gradient(90deg, #cfe7ee 45%, #d3dfeb 72%, #d5dcea); color: #111; font-family: "Open Sans", "Noto Sans", sans-serif; }
.start { width: 48px; color: #000; }
.start svg { width: 16px; height: 16px; }
.win-search { width: 288px; display: flex; align-items: center; background: #fff; border: 1px solid #c2c6c8; padding-left: 11px; overflow: hidden; }
.lens { width: 16px; height: 16px; fill: none; stroke: #222; }
.win-search input { flex: 1; margin-left: 12px; font-size: 14px; }
.win-search input::placeholder { color: #333; opacity: 1; }
.scene { width: 78px; height: 28px; align-self: flex-end; }
.task-view { width: 48px; margin-right: 3px; color: #111; }
.task-view svg { width: 16px; height: 16px; fill: none; stroke: currentColor; }
.task-view .solid { fill: currentColor; stroke: none; }
.app { position: relative; width: 48px; margin-right: 1px; }
.app svg { width: 26px; height: 26px; }
.app::after { content: ""; position: absolute; left: 4px; right: 4px; bottom: 0; height: 2px; background: #0078d7; }
.app.active { background: #ecf5f8; }
.app.active::after { left: 0; right: 0; }
.app.stacked::after { background: linear-gradient(90deg, #0078d7 32px, #63abe4 32px); }
.weather { margin-left: auto; gap: 9px; font-size: 13px; white-space: nowrap; }
.weather svg { width: 25px; height: 24px; }
.tray { display: flex; margin-left: 19px; }
.tray button { width: 24px; }
.tray svg { width: 16px; height: 16px; fill: none; stroke: #111; }
.clock { width: 64px; display: flex; flex-direction: column; justify-content: center; text-align: center; font-size: 11px; line-height: 18px; }
.notes { position: relative; width: 49px; border-right: 1px solid #9ea8b3; margin-right: 4px; color: #000; }
.notes svg { width: 16px; height: 16px; margin-right: 11px; }
.notes span { position: absolute; right: 12px; bottom: 4px; width: 17px; height: 17px; border-radius: 50%; border: 1px solid #8b8f94; background: #d4d8dd; font-size: 12px; line-height: 15px; }
</style>
